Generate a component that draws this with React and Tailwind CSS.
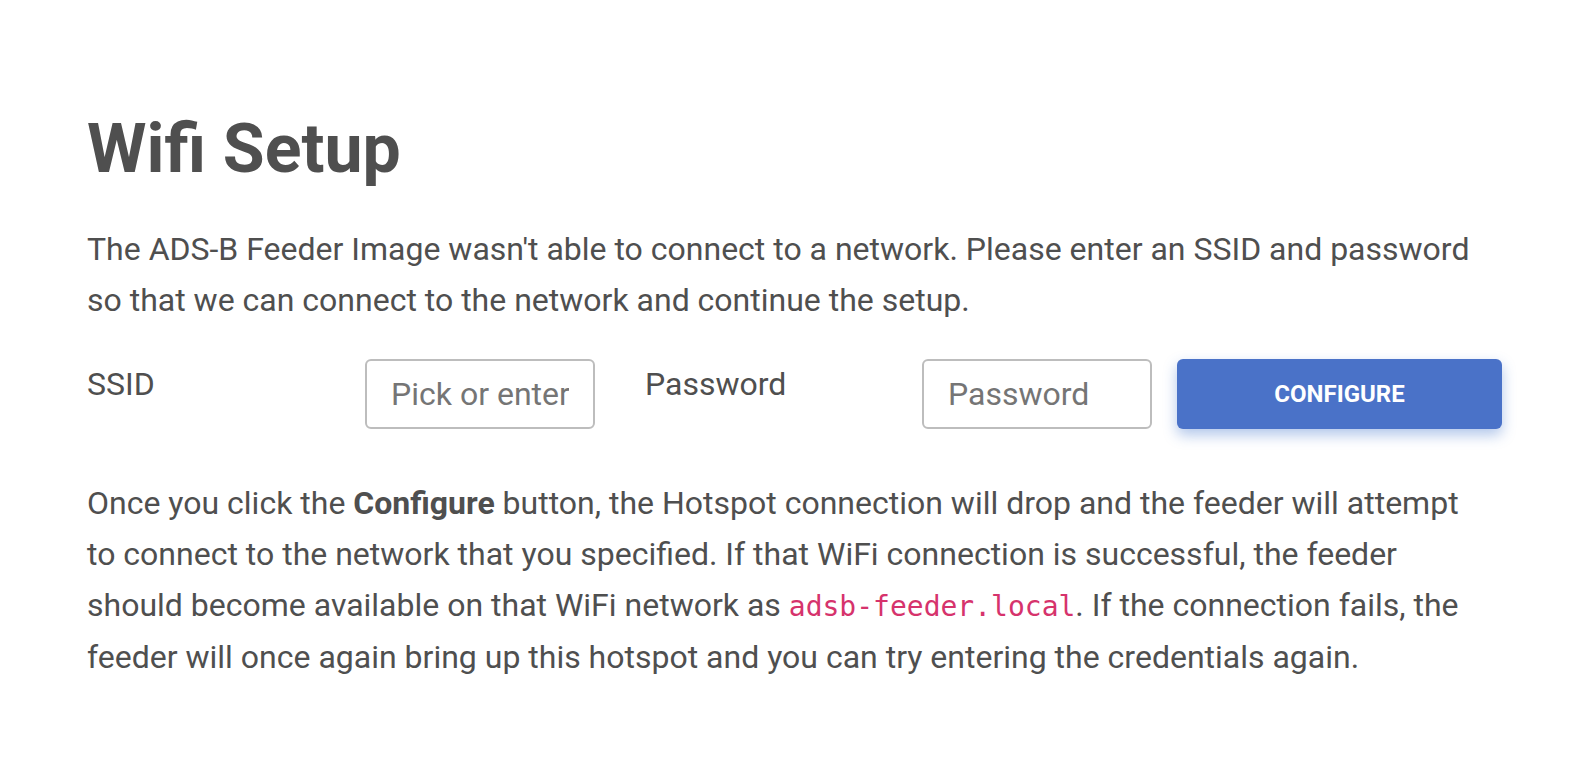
import React from "react";

const App = () => {
  return (
    <div
      className="min-h-[770px] bg-white text-[#4f4f4f] px-[87px] pt-[109px]"
      style={{ fontFamily: "Roboto, 'Liberation Sans', sans-serif" }}
    >
      <h1 className="text-[68px] font-bold leading-[1.2] mb-[33px]">Wifi Setup</h1>

      <p className="text-[32px] leading-[1.6] max-w-[1400px]">
        The ADS-B Feeder Image wasn't able to connect to a network. Please enter an SSID and password
        so that we can connect to the network and continue the setup.
      </p>

      {/* SSID / password form */}
      <form className="flex items-start mt-[33px]" onSubmit={(e) => e.preventDefault()}>
        <label className="shrink-0 w-[278px] text-[32px] leading-[1.6]">SSID</label>
        <input
          type="text"
          placeholder="Pick or enter"
          className="shrink-0 w-[230px] h-[70px] rounded-[6px] border-2 border-[#bdbdbd] px-[24px] text-[32px] text-[#4f4f4f] placeholder:text-[#757575] outline-none"
        />
        <label className="shrink-0 w-[327px] pl-[50px] text-[32px] leading-[1.6]">Password</label>
        <input
          type="password"
          placeholder="Password"
          className="shrink-0 w-[230px] h-[70px] rounded-[6px] border-2 border-[#bdbdbd] px-[24px] text-[32px] text-[#4f4f4f] placeholder:text-[#757575] outline-none"
        />
        <button
          type="submit"
          className="shrink-0 ml-[25px] w-[325px] h-[70px] rounded-[6px] bg-[#4a72c8] text-white text-[24px] font-bold uppercase shadow-[0_6px_14px_rgba(59,113,202,0.4)]"
        >
          Configure
        </button>
      </form>

      <p className="text-[32px] leading-[1.6] mt-[49px] max-w-[1400px]">
        Once you click the <strong className="font-bold">Configure</strong> button, the Hotspot connection
        will drop and the feeder will attempt to connect to the network that you specified. If that WiFi
        connection is successful, the feeder should become available on that WiFi network as{" "}
        <code
          className="text-[#d6336c] text-[28px]"
          style={{ fontFamily: "'DejaVu Sans Mono', 'Liberation Mono', monospace" }}
        >
          adsb-feeder.local
        </code>
        . If the connection fails, the feeder will once again bring up this hotspot and you can try
        entering the credentials again.
      </p>
    </div>
  );
};

export default App;
